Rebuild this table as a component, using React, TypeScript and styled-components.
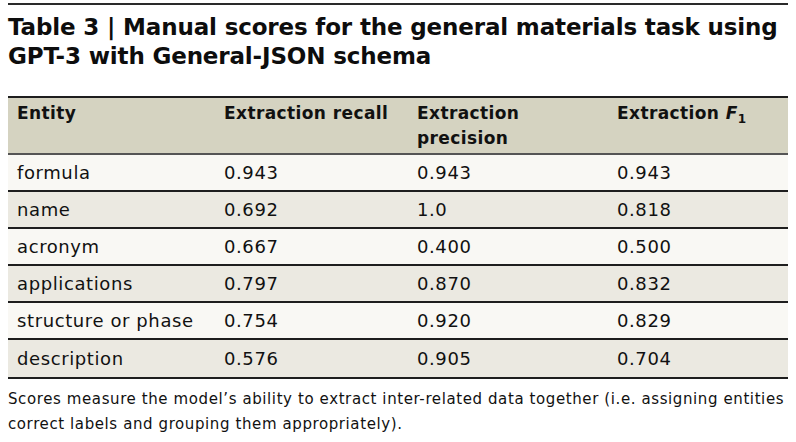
import React from "react";
import styled, { createGlobalStyle } from "styled-components";

const Global = createGlobalStyle`
  html, body { margin: 0; padding: 0; background: #ffffff; }
  body { font-family: "DejaVu Sans", "Liberation Sans", sans-serif; color: #111; }
`;

const Page = styled.div`
  width: 780px;
  padding: 3px 8px 0 8px;
`;

const TopRule = styled.div`
  height: 2px;
  background: #2a2a2a;
`;

const Title = styled.h1`
  margin: 8px 0 25px 0;
  font-size: 23px;
  letter-spacing: -0.15px;
  line-height: 29px;
  font-weight: 700;
  color: #0d0d0d;
`;

const Table = styled.div`
  display: grid;
  grid-template-columns: 207px 193px 200px 180px;
  border-top: 2px solid #1e1e1e;
  border-bottom: 2px solid #1e1e1e;
`;

const HeadCell = styled.div`
  background: #d5d3c1;
  padding: 3px 9px 6px 9px;
  font-size: 17px;
  letter-spacing: 0.4px;
  line-height: 25px;
  font-weight: 700;
  height: 57px;
  box-sizing: border-box;
  border-bottom: 2px solid #555;
`;

const Sub = styled.sub`
  font-size: 12px;
`;

const Cell = styled.div<{ $shade: boolean; $last: boolean }>`
  background: ${(p) => (p.$shade ? "#ebe9e1" : "#f9f8f4")};
  padding: 0 9px;
  font-size: 18px;
  letter-spacing: 0.6px;
  height: 37px;
  box-sizing: border-box;
  display: flex;
  align-items: center;
  border-bottom: ${(p) => (p.$last ? "none" : "2px solid #1e1e1e")};
`;

const Foot = styled.p`
  margin: 8px 0 0 0;
  font-size: 15px;
  letter-spacing: 0.6px;
  line-height: 25px;
  color: #111;
`;

const rows: string[][] = [
  ["formula", "0.943", "0.943", "0.943"],
  ["name", "0.692", "1.0", "0.818"],
  ["acronym", "0.667", "0.400", "0.500"],
  ["applications", "0.797", "0.870", "0.832"],
  ["structure or phase", "0.754", "0.920", "0.829"],
  ["description", "0.576", "0.905", "0.704"],
];

export default function App() {
  return (
    <Page>
      <Global />
      <TopRule />
      <Title>
        Table 3 | Manual scores for the general materials task using GPT-3 with General-JSON schema
      </Title>
      <Table>
        <HeadCell>Entity</HeadCell>
        <HeadCell>Extraction recall</HeadCell>
        <HeadCell>
          Extraction
          <br />
          precision
        </HeadCell>
        <HeadCell>
          Extraction <i>F</i>
          <Sub>1</Sub>
        </HeadCell>
        {rows.map((r, i) =>
          r.map((c, j) => (
            <Cell key={`${i}-${j}`} $shade={i % 2 === 1} $last={i === rows.length - 1}>
              {c}
            </Cell>
          ))
        )}
      </Table>
      <Foot>
        Scores measure the model’s ability to extract inter-related data together (i.e. assigning entities
        correct labels and grouping them appropriately).
      </Foot>
    </Page>
  );
}
